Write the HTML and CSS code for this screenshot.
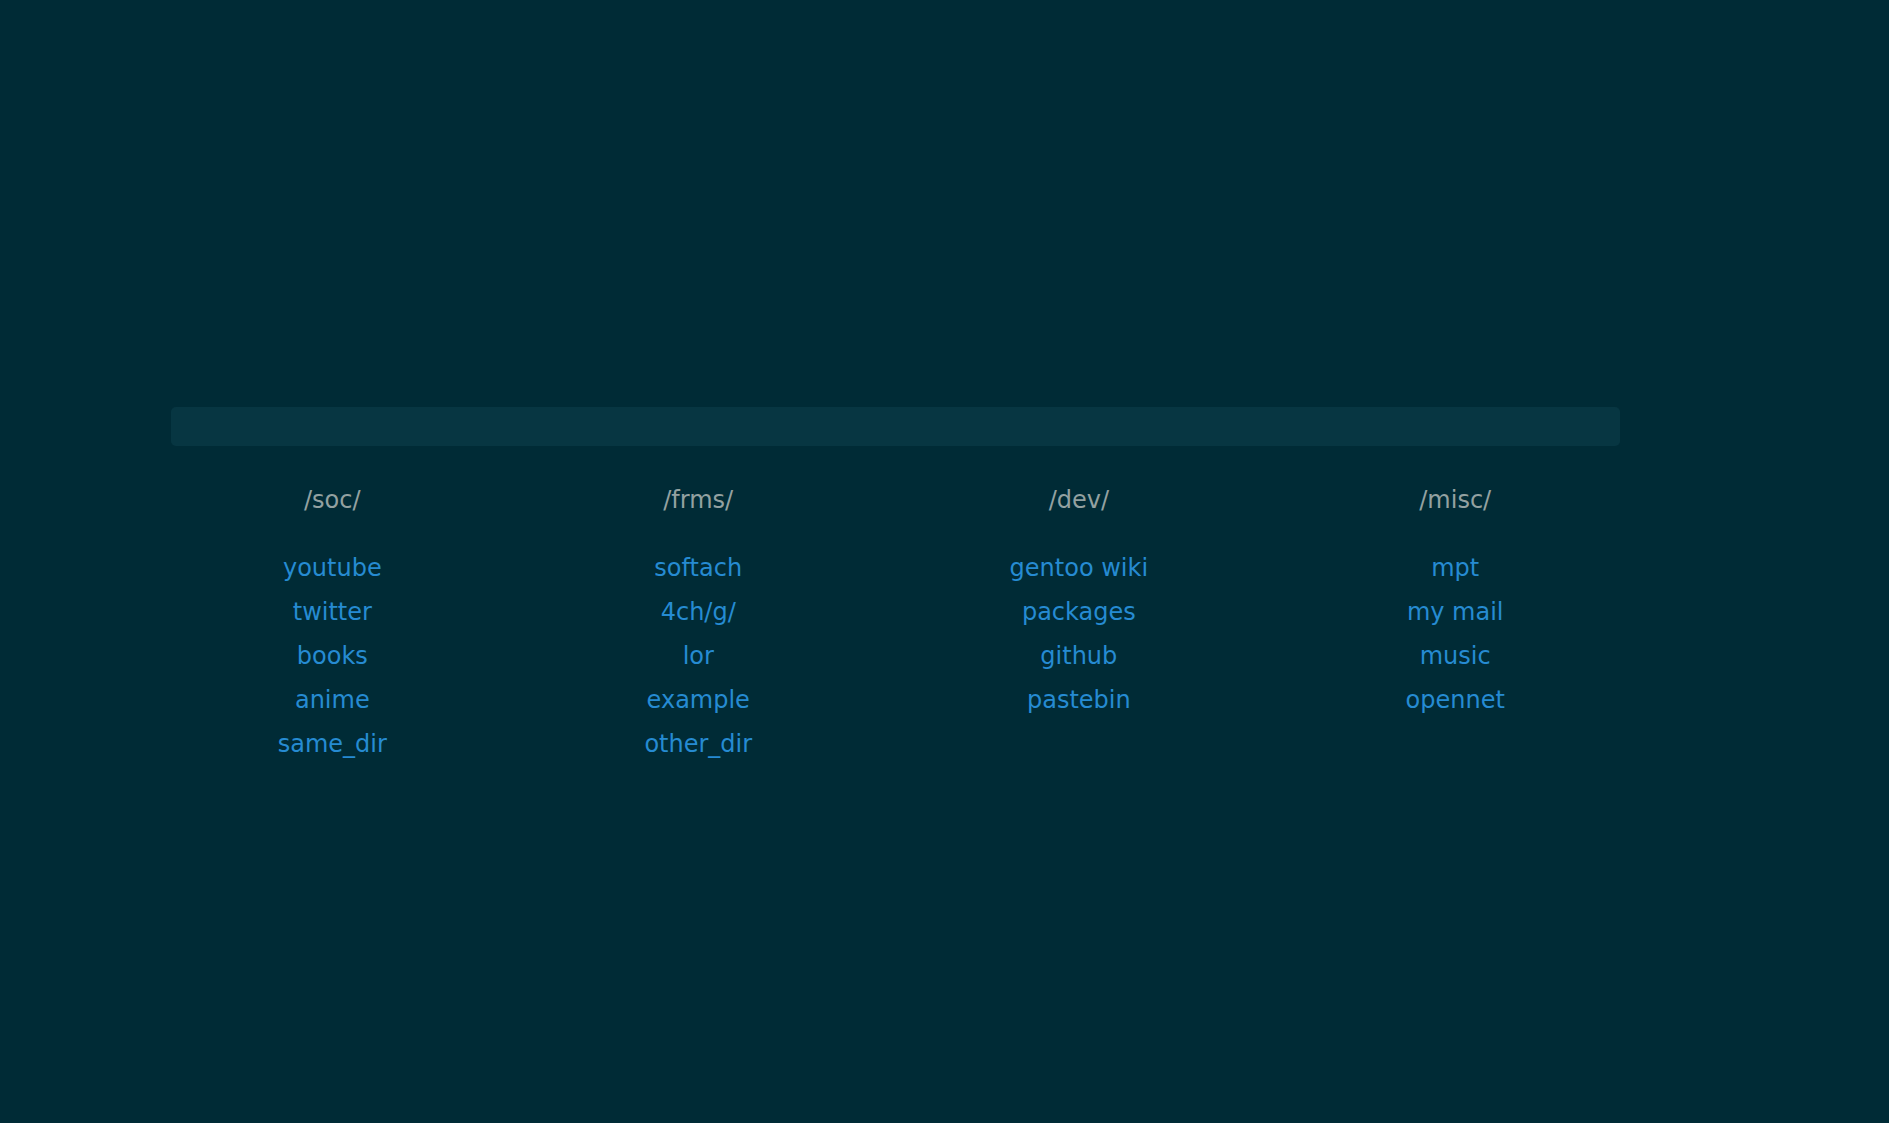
FILE: index.html
```html
<!DOCTYPE html>
<html>
<head>
<meta charset="utf-8">
<title>start</title>
<link rel="stylesheet" href="styles.css">
</head>
<body>
<main class="page">
  <div class="search"></div>
  <div class="cols">
    <div class="col">
      <div class="head">/soc/</div>
      <ul class="links">
        <li><a href="#">youtube</a></li>
        <li><a href="#">twitter</a></li>
        <li><a href="#">books</a></li>
        <li><a href="#">anime</a></li>
        <li><a href="#">same_dir</a></li>
      </ul>
    </div>
    <div class="col">
      <div class="head">/frms/</div>
      <ul class="links">
        <li><a href="#">softach</a></li>
        <li><a href="#">4ch/g/</a></li>
        <li><a href="#">lor</a></li>
        <li><a href="#">example</a></li>
        <li><a href="#">other_dir</a></li>
      </ul>
    </div>
    <div class="col">
      <div class="head">/dev/</div>
      <ul class="links">
        <li><a href="#">gentoo wiki</a></li>
        <li><a href="#">packages</a></li>
        <li><a href="#">github</a></li>
        <li><a href="#">pastebin</a></li>
      </ul>
    </div>
    <div class="col">
      <div class="head">/misc/</div>
      <ul class="links">
        <li><a href="#">mpt</a></li>
        <li><a href="#">my mail</a></li>
        <li><a href="#">music</a></li>
        <li><a href="#">opennet</a></li>
      </ul>
    </div>
  </div>
</main>
</body>
</html>
```
FILE: styles.css
```css
html, body {
  margin: 0;
  padding: 0;
  background: #002b36;
  height: 100%;
}
body {
  font-family: "DejaVu Sans", sans-serif;
  font-size: 24px;
  line-height: 44px;
}
.page {
  padding-top: 407px;
}
.search {
  margin-left: 171px;
  width: 1449px;
  height: 39px;
  background: #073642;
  border-radius: 5px;
}
.cols {
  display: flex;
  margin-left: 149px;
  margin-top: 32px;
}
.col {
  padding: 0 128.75px;
  text-align: center;
}
.head {
  color: #93a1a1;
}
.links {
  list-style: none;
  margin: 24px 0 0;
  padding: 0;
}
.links a {
  color: #268bd2;
  text-decoration: none;
}
```
